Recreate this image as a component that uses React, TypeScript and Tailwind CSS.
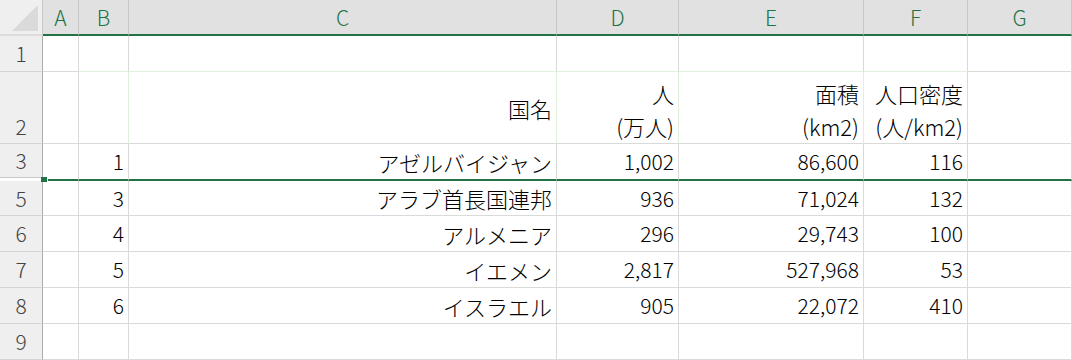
import React from 'react';

const gridCols = 'grid grid-cols-[43px_36px_50px_428px_122px_185px_104px_104px]';
const font = "font-['Noto_Sans_CJK_JP','Noto_Sans',sans-serif]";

const columns = ['A', 'B', 'C', 'D', 'E', 'F', 'G'];

type Row = { n: string; b: string; c: string; d: string; e: string; f: string };

const rows: Row[] = [
  { n: '5', b: '3', c: 'アラブ首長国連邦', d: '936', e: '71,024', f: '132' },
  { n: '6', b: '4', c: 'アルメニア', d: '296', e: '29,743', f: '100' },
  { n: '7', b: '5', c: 'イエメン', d: '2,817', e: '527,968', f: '53' },
  { n: '8', b: '6', c: 'イスラエル', d: '905', e: '22,072', f: '410' },
  { n: '9', b: '', c: '', d: '', e: '', f: '' },
];

const RowHead = ({ label, className = '' }: { label: string; className?: string }) => (
  <div
    className={`flex items-center justify-center bg-[#efefef] border-r border-r-[#ababab] border-b border-b-[#d4d4d4] text-[#444] ${className}`}
  >
    {label}
  </div>
);

const Cell = ({ children, className = '' }: { children?: React.ReactNode; className?: string }) => (
  <div
    className={`flex items-center justify-end pr-1 bg-white border-r border-b border-[#dadada] text-black whitespace-nowrap ${className}`}
  >
    {children}
  </div>
);

// header cells of the table (row 2) with the light green fill
const headFill = 'bg-[#e2efda] border-r-[#e2efda] text-[22px]';
const twoLines = 'flex-col items-end justify-center leading-[33px]';

export default function App() {
  return (
    <div className={`w-[1072px] h-[360px] overflow-hidden bg-white text-[21px] leading-none font-light ${font}`}>
      {/* column headers */}
      <div className={`${gridCols} h-[36px]`}>
        <div className="bg-[#efefef] border-r border-r-[#c8c8c8] border-b-2 border-b-[#dcdcdc]">
          <svg width="42" height="34" viewBox="0 0 42 34">
            <polygon points="38,5 38,31 12,31" fill="#dadada" />
          </svg>
        </div>
        {columns.map((c) => (
          <div
            key={c}
            className="flex items-center justify-center bg-[#e1e1e1] border-r border-r-[#c6c6c6] border-b-2 border-b-[#217346] text-[#217346]"
          >
            {c}
          </div>
        ))}
      </div>

      {/* row 1 */}
      <div className={`${gridCols} h-[36px]`}>
        <RowHead label="1" />
        <Cell />
        <Cell className="border-b-[#e2efda]" />
        <Cell className="border-b-[#e2efda]" />
        <Cell className="border-b-[#e2efda]" />
        <Cell className="border-b-[#e2efda]" />
        <Cell className="border-b-[#e2efda]" />
        <Cell />
      </div>

      {/* row 2: table header */}
      <div className={`${gridCols} h-[72px]`}>
        <div className="flex items-end justify-center bg-[#efefef] border-r border-r-[#ababab] border-b border-b-[#d4d4d4] text-[#444]">
          <div className="h-[33px] flex items-center">2</div>
        </div>
        <Cell />
        <Cell className={headFill} />
        <Cell className={headFill}>国名</Cell>
        <Cell className={`${headFill} ${twoLines}`}>
          <span>人</span>
          <span>(万人)</span>
        </Cell>
        <Cell className={`${headFill} ${twoLines}`}>
          <span>面積</span>
          <span>(km2)</span>
        </Cell>
        <Cell className={`bg-[#e2efda] text-[22px] ${twoLines}`}>
          <span>人口密度</span>
          <span>(人/km2)</span>
        </Cell>
        <Cell />
      </div>

      {/* row 3, row 4 hidden below it */}
      <div className={`${gridCols} h-[37px]`}>
        <div className="flex flex-col bg-[#efefef] border-r border-r-[#ababab] text-[#444]">
          <div className="h-[34px] flex items-center justify-center border-b border-[#c8c8c8]">3</div>
          <div className="flex-1 bg-white" />
        </div>
        <Cell className="relative border-b-2 border-b-[#217346]">
          <span className="absolute left-[-2px] bottom-[-3px] w-[6px] h-[5px] bg-[#217346] border-r border-white box-content" />
        </Cell>
        <Cell className="border-b-2 border-b-[#217346]">1</Cell>
        <Cell className="border-b-2 border-b-[#217346] text-[22px]">アゼルバイジャン</Cell>
        <Cell className="border-b-2 border-b-[#217346]">1,002</Cell>
        <Cell className="border-b-2 border-b-[#217346]">86,600</Cell>
        <Cell className="border-b-2 border-b-[#217346]">116</Cell>
        <Cell className="border-b-2 border-b-[#217346]" />
      </div>

      {rows.map((r, i) => (
        <div key={r.n} className={`${gridCols} ${i === 0 ? 'h-[35px]' : 'h-[36px]'}`}>
          <RowHead label={r.n} />
          <Cell />
          <Cell>{r.b}</Cell>
          <Cell className="text-[22px]">{r.c}</Cell>
          <Cell>{r.d}</Cell>
          <Cell>{r.e}</Cell>
          <Cell>{r.f}</Cell>
          <Cell />
        </div>
      ))}
    </div>
  );
}
